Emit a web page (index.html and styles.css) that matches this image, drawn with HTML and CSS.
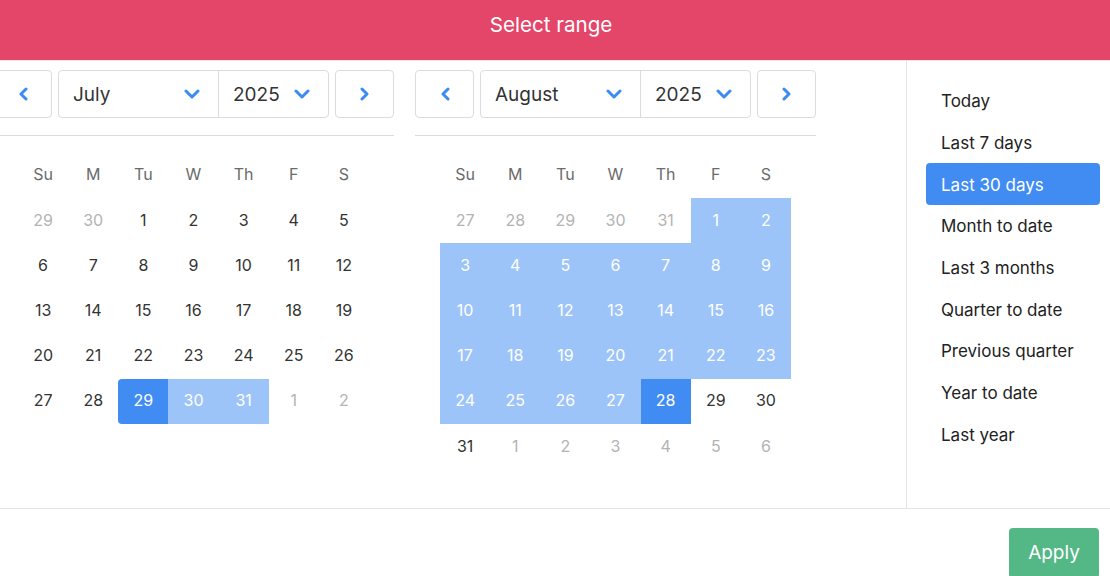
FILE: index.html
```html
<!DOCTYPE html>
<html>
<head>
<meta charset="utf-8">
<link rel="stylesheet" href="styles.css">
</head>
<body>
<div class="modal">
  <header class="hdr">Select range</header>
  <div class="content">
    <div class="main">
      <div class="cals">
        <section class="cal">
          <div class="toolbar">
            <button class="nav"><svg width="10" height="14" viewBox="0 0 10 14"><polyline points="8,2 3,7 8,12"/></svg></button>
            <div class="select">
              <div class="sel-month"><span>July</span><svg width="16" height="10" viewBox="0 0 16 10"><polyline points="2,2 8,8 14,2"/></svg></div>
              <div class="sel-year"><span>2025</span><svg width="16" height="10" viewBox="0 0 16 10"><polyline points="2,2 8,8 14,2"/></svg></div>
            </div>
            <button class="nav"><svg width="10" height="14" viewBox="0 0 10 14"><polyline points="2,2 7,7 2,12"/></svg></button>
          </div>
          <div class="rule"></div>
          <div class="weekdays"><span>Su</span><span>M</span><span>Tu</span><span>W</span><span>Th</span><span>F</span><span>S</span></div>
          <div class="days">
            <div class="d off">29</div><div class="d off">30</div><div class="d">1</div><div class="d">2</div><div class="d">3</div><div class="d">4</div><div class="d">5</div>
            <div class="d">6</div><div class="d">7</div><div class="d">8</div><div class="d">9</div><div class="d">10</div><div class="d">11</div><div class="d">12</div>
            <div class="d">13</div><div class="d">14</div><div class="d">15</div><div class="d">16</div><div class="d">17</div><div class="d">18</div><div class="d">19</div>
            <div class="d">20</div><div class="d">21</div><div class="d">22</div><div class="d">23</div><div class="d">24</div><div class="d">25</div><div class="d">26</div>
            <div class="d">27</div><div class="d">28</div><div class="d sel start">29</div><div class="d in">30</div><div class="d in">31</div><div class="d off">1</div><div class="d off">2</div>
          </div>
        </section>
        <section class="cal">
          <div class="toolbar">
            <button class="nav"><svg width="10" height="14" viewBox="0 0 10 14"><polyline points="8,2 3,7 8,12"/></svg></button>
            <div class="select">
              <div class="sel-month"><span>August</span><svg width="16" height="10" viewBox="0 0 16 10"><polyline points="2,2 8,8 14,2"/></svg></div>
              <div class="sel-year"><span>2025</span><svg width="16" height="10" viewBox="0 0 16 10"><polyline points="2,2 8,8 14,2"/></svg></div>
            </div>
            <button class="nav"><svg width="10" height="14" viewBox="0 0 10 14"><polyline points="2,2 7,7 2,12"/></svg></button>
          </div>
          <div class="rule"></div>
          <div class="weekdays"><span>Su</span><span>M</span><span>Tu</span><span>W</span><span>Th</span><span>F</span><span>S</span></div>
          <div class="days">
            <div class="d off">27</div><div class="d off">28</div><div class="d off">29</div><div class="d off">30</div><div class="d off">31</div><div class="d in">1</div><div class="d in">2</div>
            <div class="d in">3</div><div class="d in">4</div><div class="d in">5</div><div class="d in">6</div><div class="d in">7</div><div class="d in">8</div><div class="d in">9</div>
            <div class="d in">10</div><div class="d in">11</div><div class="d in">12</div><div class="d in">13</div><div class="d in">14</div><div class="d in">15</div><div class="d in">16</div>
            <div class="d in">17</div><div class="d in">18</div><div class="d in">19</div><div class="d in">20</div><div class="d in">21</div><div class="d in">22</div><div class="d in">23</div>
            <div class="d in">24</div><div class="d in">25</div><div class="d in">26</div><div class="d in">27</div><div class="d sel">28</div><div class="d">29</div><div class="d">30</div>
            <div class="d">31</div><div class="d off">1</div><div class="d off">2</div><div class="d off">3</div><div class="d off">4</div><div class="d off">5</div><div class="d off">6</div>
          </div>
        </section>
      </div>
    </div>
    <aside class="side">
      <div class="opt">Today</div>
      <div class="opt">Last 7 days</div>
      <div class="opt active">Last 30 days</div>
      <div class="opt">Month to date</div>
      <div class="opt">Last 3 months</div>
      <div class="opt">Quarter to date</div>
      <div class="opt">Previous quarter</div>
      <div class="opt">Year to date</div>
      <div class="opt">Last year</div>
    </aside>
  </div>
  <footer class="foot">
    <button class="apply">Apply</button>
  </footer>
</div>
</body>
</html>
```

FILE: styles.css
```css
* { box-sizing: border-box; }
html, body { margin: 0; padding: 0; background: #fff; }
body {
  font-family: Inter, "Noto Sans", "Liberation Sans", sans-serif;
  color: #333;
  width: 1110px;
  height: 576px;
  overflow: hidden;
}
.hdr {
  height: 61px;
  background: #e4466a;
  border-bottom: 1px solid #fbe3e8;
  color: #fff;
  font-size: 20.6px;
  line-height: 50px;
  text-align: center;
  padding-right: 8px;
}
.content {
  display: flex;
  height: 448px;
  margin-top: -1px;
}
.main {
  flex: 1;
  overflow: hidden;
}
.cals {
  display: flex;
  gap: 21px;
  margin-left: -7px;
  padding-top: 10px;
}
.cal {
  width: 401px;
  flex: none;
}
.toolbar {
  display: flex;
  gap: 6px;
  height: 48px;
}
.nav {
  width: 59px;
  height: 48px;
  border: 1px solid #dcdcdc;
  border-radius: 4px;
  background: #fff;
  display: flex;
  align-items: center;
  justify-content: center;
  padding: 0;
}
svg polyline {
  fill: none;
  stroke: #3a8bf2;
  stroke-width: 3;
  stroke-linecap: round;
  stroke-linejoin: round;
}
.select {
  width: 271px;
  display: flex;
  border: 1px solid #dcdcdc;
  border-radius: 4px;
  font-size: 19px;
  color: #333;
}
.sel-month, .sel-year {
  display: flex;
  align-items: center;
  justify-content: space-between;
  padding: 0 18px 0 14px;
}
.sel-month { width: 160px; border-right: 1px solid #dcdcdc; }
.sel-year { flex: 1; }
.rule {
  height: 1px;
  background: #dcdcdc;
  margin-top: 17px;
}
.weekdays, .days {
  display: grid;
  grid-template-columns: repeat(7, 1fr);
  margin: 0 25px;
}
.weekdays {
  margin-top: 16px;
  height: 46px;
  padding-bottom: 2px;
  align-items: center;
  text-align: center;
  font-size: 16px;
  color: #6b6b6b;
}
.days {
  grid-auto-rows: 45.2px;
}
.d {
  display: flex;
  align-items: center;
  justify-content: center;
  font-size: 16px;
  color: #333;
  padding-bottom: 2px;
}
.d.off { color: #b3b3b3; }
.d.in { background: #9dc4f8; color: #fff; }
.d.sel { background: #408cf2; color: #fff; }
.d.start { border-radius: 4px 0 0 4px; }
.side {
  width: 204px;
  flex: none;
  border-left: 1px solid #e4e4e4;
  padding: 20px 10px 0 19px;
}
.opt {
  height: 41.7px;
  display: flex;
  align-items: center;
  padding-left: 15px;
  padding-top: 1px;
  font-size: 17px;
  color: #222;
  border-radius: 4px;
}
.opt.active { background: #408cf2; color: #fff; }
.foot {
  border-top: 1px solid #e4e4e4;
  height: 68px;
  display: flex;
  justify-content: flex-end;
  align-items: flex-start;
  padding: 19px 11px 0 0;
}
.apply {
  width: 90px;
  height: 50px;
  background: #54b886;
  border: none;
  border-radius: 4px;
  color: #fff;
  font-family: inherit;
  font-size: 19px;
  padding: 0 0 2px;
}
```
